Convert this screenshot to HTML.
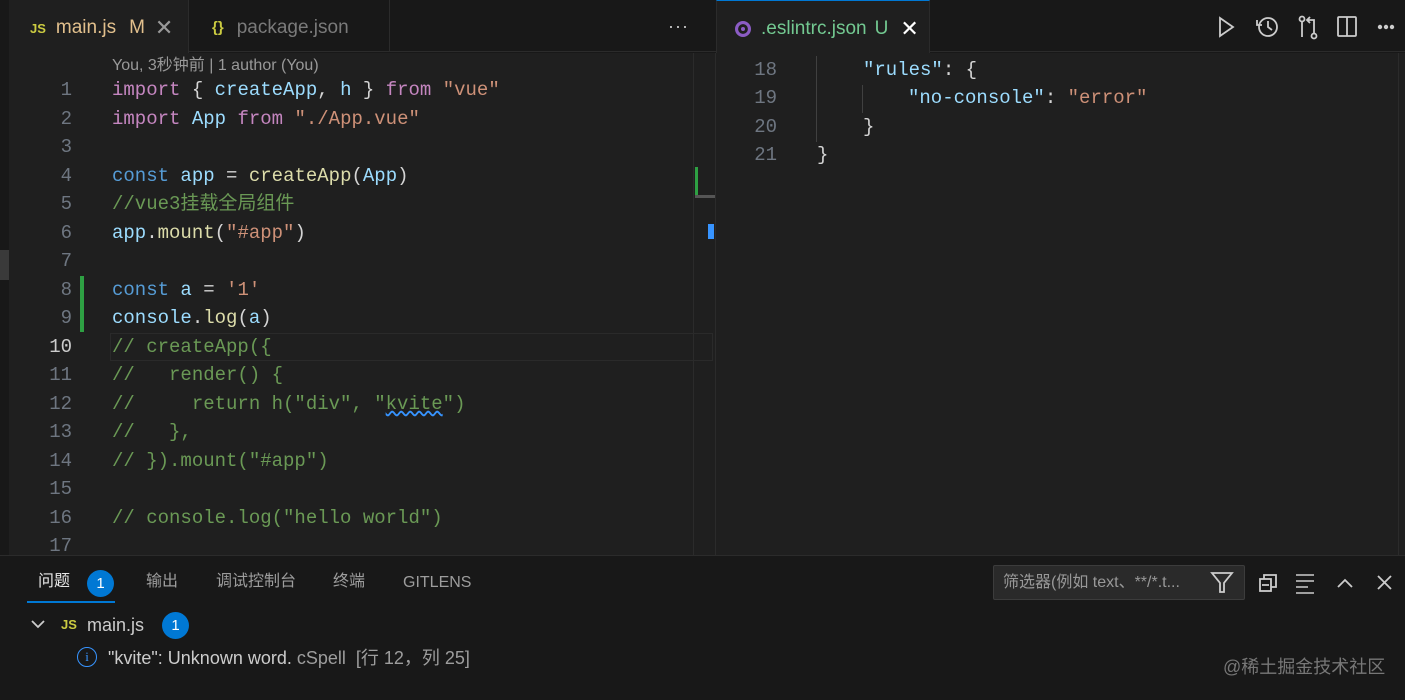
<!DOCTYPE html>
<html><head><meta charset="utf-8"><style>
*{margin:0;padding:0;box-sizing:border-box}
body{width:1405px;height:700px;background:#181818;position:relative;overflow:hidden;font-family:"Liberation Sans","Noto Sans CJK SC",sans-serif;color:#ccc}
.abs{position:absolute;line-height:20px}
.mono{font-family:"Liberation Mono","Noto Sans CJK SC",monospace;font-size:19px;white-space:pre}
.ln{position:absolute;width:60px;text-align:right;color:#6e7681;font-family:"Liberation Mono",monospace;font-size:19px;line-height:24px}
.code{position:absolute;line-height:24px}
.k{color:#c586c0}.v{color:#9cdcfe}.f{color:#dcdcaa}.s{color:#ce9178}.c{color:#6a9955}.b{color:#569cd6}.p{color:#d4d4d4}.t{color:#4ec9b0}
.tab{position:absolute;top:0;height:52px;font-size:19px;display:flex;align-items:center;padding-top:3px}
</style></head><body>
<div class="abs" style="left:0;top:0;width:9px;height:700px;background:#181818"></div>
<div class="abs" style="left:0;top:250px;width:9px;height:30px;background:#3a3a3a"></div>
<div class="abs" style="left:9px;top:0;width:1396px;height:52px;background:#181818;border-bottom:1px solid #2b2b2b"></div>
<div class="tab" style="left:9px;width:180px;background:#1f1f1f;border-right:1px solid #2b2b2b;height:53px">
 <span style="color:#cbcb41;font-size:13px;font-weight:bold;margin-left:21px">JS</span>
 <span style="color:#e2c08d;margin-left:10px">main.js</span>
 <span style="color:#e2c08d;margin-left:13px">M</span>
 <span style="color:#999;margin-left:10px;font-size:22px">✕</span>
</div>
<div class="tab" style="left:190px;width:200px;border-right:1px solid #2b2b2b">
 <span style="color:#cbcb41;font-size:15px;font-weight:bold;margin-left:22px">{}</span>
 <span style="color:#7a7a7a;margin-left:13px">package.json</span>
</div>
<div class="abs" style="left:668px;top:16px;color:#ccc;font-size:18px;letter-spacing:1px">···</div>
<div class="tab" style="left:716px;width:214px;background:#1f1f1f;border-right:1px solid #2b2b2b;border-left:1px solid #2b2b2b;height:53px;border-top:1px solid #0078d4">
 <span style="display:inline-block;width:16px;height:16px;margin-left:18px;border-radius:50%;background:#8b5cc4;border:3px solid #8b5cc4;box-shadow:inset 0 0 0 3px #1f1f1f"></span>
 <span style="color:#73c991;margin-left:10px">.eslintrc.json</span>
 <span style="color:#73c991;margin-left:8px">U</span>
 <span style="color:#fff;margin-left:12px;font-size:22px">✕</span>
</div>
<svg class="abs" style="left:1210px;top:12px" width="190" height="30" fill="none" stroke="#ccc" stroke-width="1.8">
 <path d="M10 6 L23 15 L10 24 Z"/>
 <circle cx="58" cy="15" r="9"/><path d="M58 9v6l4 3"/><path d="M47 8v5h5" />
 <circle cx="92" cy="7" r="2.5"/><circle cx="104" cy="24" r="2.5"/><path d="M92 10v15M104 21V8h-6M100 5l-3 3 3 3"/>
 <rect x="128" y="5" width="18" height="19" rx="1"/><path d="M137 5v19"/>
 <circle cx="170" cy="15" r="1.3" fill="#ccc"/><circle cx="176" cy="15" r="1.3" fill="#ccc"/><circle cx="182" cy="15" r="1.3" fill="#ccc"/>
</svg>
<div class="abs" style="left:9px;top:53px;width:706px;height:502px;background:#1f1f1f"></div>
<div class="abs" style="left:715px;top:53px;width:1px;height:502px;background:#2b2b2b"></div>
<div class="abs" style="left:693px;top:53px;width:1px;height:502px;background:#2b2b2b"></div>
<div class="abs" style="left:695px;top:167px;width:3px;height:28px;background:#2ea043"></div>
<div class="abs" style="left:695px;top:195px;width:20px;height:3px;background:#555"></div>
<div class="abs" style="left:708px;top:224px;width:6px;height:15px;background:#3794ff"></div>
<div class="abs" style="left:110px;top:333px;width:603px;height:28px;border:1px solid #2a2a2a"></div>
<div class="abs" style="left:80px;top:276px;width:4px;height:56px;background:#2ea043"></div>
<div class="abs" style="left:112px;top:56px;font-size:16px;color:#999">You, 3秒钟前 | 1 author (You)</div>
<div class="mono">
<div class="ln" style="left:12px;top:78px">1</div><div class="code" style="left:112px;top:78px"><span class="k">import</span><span class="p"> { </span><span class="v">createApp</span><span class="p">, </span><span class="v">h</span><span class="p"> } </span><span class="k">from</span> <span class="s">"vue"</span></div>
<div class="ln" style="left:12px;top:107px">2</div><div class="code" style="left:112px;top:107px"><span class="k">import</span> <span class="v">App</span> <span class="k">from</span> <span class="s">"./App.vue"</span></div>
<div class="ln" style="left:12px;top:135px">3</div>
<div class="ln" style="left:12px;top:164px">4</div><div class="code" style="left:112px;top:164px"><span class="b">const</span> <span class="v">app</span><span class="p"> = </span><span class="f">createApp</span><span class="p">(</span><span class="v">App</span><span class="p">)</span></div>
<div class="ln" style="left:12px;top:192px">5</div><div class="code c" style="left:112px;top:192px">//vue3挂载全局组件</div>
<div class="ln" style="left:12px;top:221px">6</div><div class="code" style="left:112px;top:221px"><span class="v">app</span><span class="p">.</span><span class="f">mount</span><span class="p">(</span><span class="s">"#app"</span><span class="p">)</span></div>
<div class="ln" style="left:12px;top:249px">7</div>
<div class="ln" style="left:12px;top:278px">8</div><div class="code" style="left:112px;top:278px"><span class="b">const</span> <span class="v">a</span><span class="p"> = </span><span class="s">'1'</span></div>
<div class="ln" style="left:12px;top:306px">9</div><div class="code" style="left:112px;top:306px"><span class="v">console</span><span class="p">.</span><span class="f">log</span><span class="p">(</span><span class="v">a</span><span class="p">)</span></div>
<div class="ln" style="left:12px;top:335px;color:#ccc">10</div><div class="code c" style="left:112px;top:335px">// createApp({</div>
<div class="ln" style="left:12px;top:363px">11</div><div class="code c" style="left:112px;top:363px">//   render() {</div>
<div class="ln" style="left:12px;top:392px">12</div><div class="code c" style="left:112px;top:392px">//     return h("div", "<span style="text-decoration:underline wavy #3794ff">kvite</span>")</div>
<div class="ln" style="left:12px;top:420px">13</div><div class="code c" style="left:112px;top:420px">//   },</div>
<div class="ln" style="left:12px;top:449px">14</div><div class="code c" style="left:112px;top:449px">// }).mount("#app")</div>
<div class="ln" style="left:12px;top:477px">15</div>
<div class="ln" style="left:12px;top:506px">16</div><div class="code c" style="left:112px;top:506px">// console.log("hello world")</div>
<div class="ln" style="left:12px;top:534px">17</div>
</div>
<div class="abs" style="left:716px;top:53px;width:689px;height:502px;background:#1f1f1f"></div>
<div class="abs" style="left:1398px;top:53px;width:1px;height:502px;background:#2b2b2b"></div>
<div class="abs" style="left:816px;top:56px;width:1px;height:86px;background:#404040"></div>
<div class="abs" style="left:862px;top:85px;width:1px;height:28px;background:#404040"></div>
<div class="mono">
<div class="ln" style="left:717px;top:58px">18</div><div class="code" style="left:863px;top:58px"><span class="v">"rules"</span><span class="p">: {</span></div>
<div class="ln" style="left:717px;top:86px">19</div><div class="code" style="left:908px;top:86px"><span class="v">"no-console"</span><span class="p">: </span><span class="s">"error"</span></div>
<div class="ln" style="left:717px;top:115px">20</div><div class="code p" style="left:863px;top:115px">}</div>
<div class="ln" style="left:717px;top:143px">21</div><div class="code p" style="left:817px;top:143px">}</div>
</div>
<div class="abs" style="left:0;top:555px;width:1405px;height:145px;background:#181818;border-top:1px solid #2b2b2b"></div>
<div class="abs" style="left:38px;top:572px;font-size:16px;color:#e7e7e7">问题</div>
<div class="abs" style="left:87px;top:570px;width:27px;height:27px;border-radius:50%;background:#0078d4;color:#fff;font-size:15px;text-align:center;line-height:27px">1</div>
<div class="abs" style="left:27px;top:601px;width:88px;height:2px;background:#0078d4"></div>
<div class="abs" style="left:146px;top:572px;font-size:16px;color:#9d9d9d">输出</div>
<div class="abs" style="left:216px;top:572px;font-size:16px;color:#9d9d9d">调试控制台</div>
<div class="abs" style="left:333px;top:572px;font-size:16px;color:#9d9d9d">终端</div>
<div class="abs" style="left:403px;top:573px;font-size:16px;color:#9d9d9d">GITLENS</div>
<div class="abs" style="left:993px;top:565px;width:252px;height:35px;background:#2a2a2a;border:1px solid #3c3c3c;border-radius:2px"></div>
<div class="abs" style="left:1003px;top:573px;font-size:16px;color:#989898">筛选器(例如 text、**/*.t...</div>
<svg class="abs" style="left:1210px;top:570px" width="190" height="26" fill="none" stroke="#ccc" stroke-width="1.8">
 <path d="M2 3h20l-8 10v9h-4v-9z"/>
 <rect x="50" y="9" width="11" height="12"/><path d="M54 9V5h12v12h-5M52 15h7"/>
 <path d="M86 5h18M86 11h18M86 17h12M86 23h18" stroke-width="1.6"/>
 <path d="M128 17l7-7 7 7"/>
 <path d="M168 6l13 13M181 6l-13 13"/>
</svg>
<svg class="abs" style="left:30px;top:617px" width="16" height="14" fill="none" stroke="#ccc" stroke-width="1.8"><path d="M2 4l6 6 6-6"/></svg>
<div class="abs" style="left:61px;top:615px;color:#cbcb41;font-size:13px;font-weight:bold">JS</div>
<div class="abs" style="left:87px;top:615px;font-size:18px;color:#ccc">main.js</div>
<div class="abs" style="left:162px;top:612px;width:27px;height:27px;border-radius:50%;background:#0078d4;color:#fff;font-size:15px;text-align:center;line-height:27px">1</div>
<div class="abs" style="left:77px;top:647px;width:20px;height:20px;border-radius:50%;border:1.8px solid #3794ff;color:#3794ff;font-size:13px;text-align:center;line-height:17px;font-family:'Liberation Serif',serif">i</div>
<div class="abs" style="left:108px;top:648px;font-size:18px;color:#ccc">"kvite": Unknown word. <span style="color:#9d9d9d">cSpell&nbsp; [行 12，列 25]</span></div>
<div class="abs" style="left:1223px;top:657px;font-size:18px;color:#777">@稀土掘金技术社区</div>
</body></html>
